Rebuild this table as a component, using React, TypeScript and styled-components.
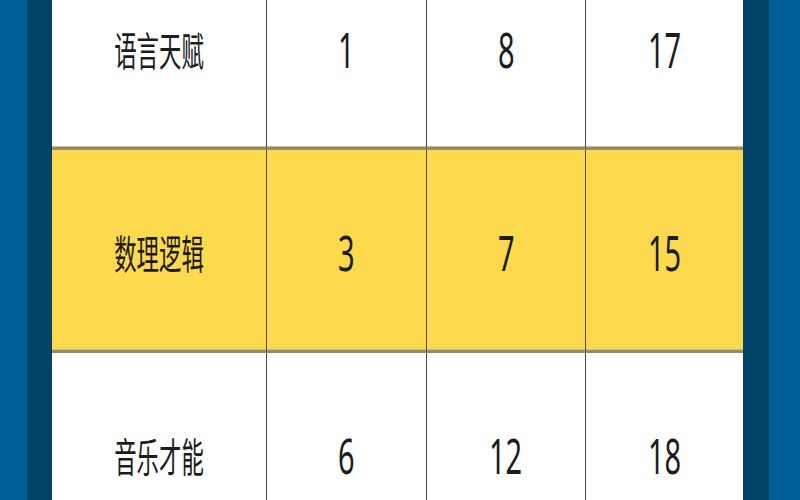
import React from 'react';
import styled, { createGlobalStyle } from 'styled-components';

const GlobalStyle = createGlobalStyle`
    html, body {
        margin: 0;
        padding: 0;
        overflow: hidden;
        background: #005e96;
    }
`;

type Row = {
    label: string;
    values: number[];
    highlight?: boolean;
};

const rows: Row[] = [
    { label: '语言天赋', values: [1, 8, 17] },
    { label: '数理逻辑', values: [3, 7, 15], highlight: true },
    { label: '音乐才能', values: [6, 12, 18] },
];

const Page = styled.div`
    width: 800px;
    height: 500px;
    box-sizing: border-box;
    padding: 0 31px 0 27px;
    background: #005e96;
    overflow: hidden;
`;

const Frame = styled.div`
    height: 100%;
    box-sizing: border-box;
    border-left: 25px solid #004268;
    border-right: 26px solid #004268;
    background: #ffffff;
    overflow: hidden;
`;

const Table = styled.div`
    display: grid;
    grid-template-columns: 214px 160px 159px 1fr;
    margin-top: -53px;
`;

const Cell = styled.div<{ $highlight?: boolean; $divider?: boolean }>`
    height: 200px;
    display: flex;
    align-items: center;
    justify-content: center;
    background: ${(p) => (p.$highlight ? '#fdd94e' : '#ffffff')};
    border-bottom: 3px solid #978c66;
    border-left: ${(p) => (p.$divider ? '1px solid #4a4a4a' : 'none')};
    box-shadow: inset 0 -1px 0 #c9bf8a;
    font-family: 'Noto Sans', 'Noto Sans CJK SC', sans-serif;
    color: #1c1c1c;
`;

const Label = styled.span`
    display: inline-block;
    font-family: 'Noto Sans CJK SC', 'Noto Sans', sans-serif;
    font-size: 40px;
    line-height: 1;
    transform: scaleX(0.56) translateY(2px);
`;

const Value = styled.span`
    display: inline-block;
    font-family: 'Noto Sans', 'DejaVu Sans', sans-serif;
    font-size: 50px;
    line-height: 1;
    transform: scaleX(0.58) translateY(2px);
`;

const App: React.FC = () => {
    return (
        <Page>
            <GlobalStyle />
            <Frame>
                <Table>
                    {rows.map((row) => (
                        <React.Fragment key={row.label}>
                            <Cell $highlight={row.highlight}>
                                <Label>{row.label}</Label>
                            </Cell>
                            {row.values.map((v, i) => (
                                <Cell key={i} $highlight={row.highlight} $divider>
                                    <Value>{v}</Value>
                                </Cell>
                            ))}
                        </React.Fragment>
                    ))}
                </Table>
            </Frame>
        </Page>
    );
};

export default App;
